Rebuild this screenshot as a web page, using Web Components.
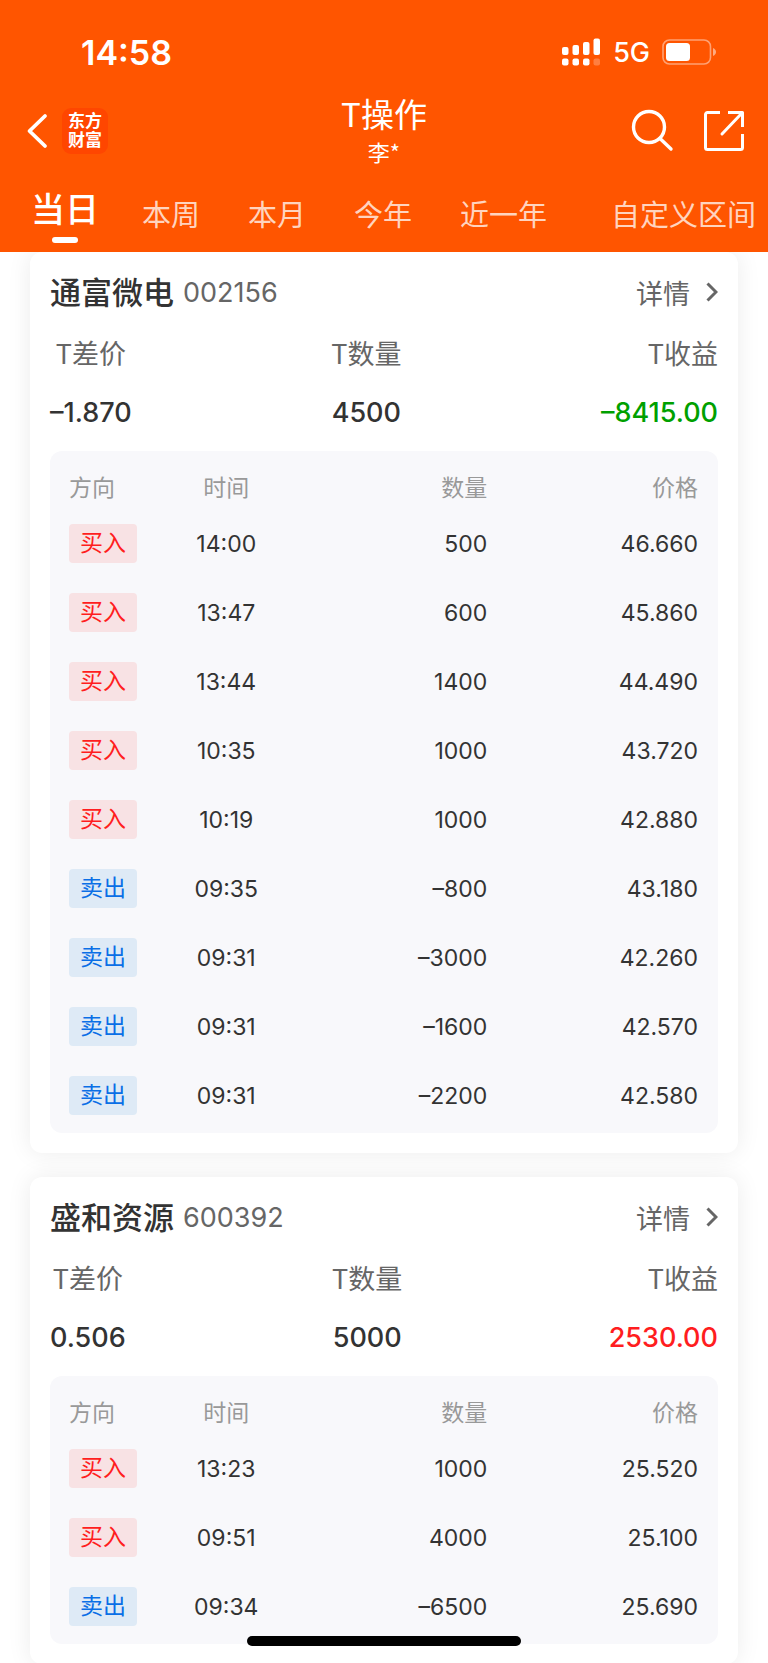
<!DOCTYPE html>
<html lang="zh-CN">
<head>
<meta charset="utf-8">
<meta name="viewport" content="width=device-width, initial-scale=1">
<title>T操作</title>
<style>
html, body {
	margin: 0;
	height: 100%;
}
body {
	font-family: Inter, "Noto Sans CJK SC", sans-serif;
	font-size: 24px;
	color: #333;
	background: #fff;
	--brand: #ff5500;
	--up: #ff1d20;
	--down: #00a000;
}
</style>
</head>
<body>
<t-app></t-app>
<script>
const stocks = [
	{
		name: '通富微电',
		code: '002156',
		spread: '–1.870',
		qty: '4500',
		profit: '–8415.00',
		tone: 'down',
		rows: [
			['14:00', 500, '46.660'],
			['13:47', 600, '45.860'],
			['13:44', 1400, '44.490'],
			['10:35', 1000, '43.720'],
			['10:19', 1000, '42.880'],
			['09:35', -800, '43.180'],
			['09:31', -3000, '42.260'],
			['09:31', -1600, '42.570'],
			['09:31', -2200, '42.580']
		]
	},
	{
		name: '盛和资源',
		code: '600392',
		spread: '0.506',
		qty: '5000',
		profit: '2530.00',
		tone: 'up',
		rows: [
			['13:23', 1000, '25.520'],
			['09:51', 4000, '25.100'],
			['09:34', -6500, '25.690']
		]
	}
];

const signed = n => n < 0 ? '–' + -n : String(n);

const define = (name, template, setup) => {
	customElements.define(name, class extends HTMLElement {
		constructor() {
			super();
			this.attachShadow({mode: 'open'}).innerHTML = template;
		}
		connectedCallback() {
			if (setup) setup(this, this.shadowRoot);
		}
	});
};

define('status-bar', `
<style>
:host {
	display: flex;
	align-items: center;
	justify-content: space-between;
	height: 72px;
	padding: 16px 51px 0 81px;
	color: #fff;
}
.time {
	font-size: 34px;
	font-weight: 600;
}
.right {
	display: flex;
	align-items: center;
	gap: 12px;
	font-size: 27px;
	font-weight: 500;
}
svg { display: block; }
</style>
<span class="time">14:58</span>
<div class="right">
	<svg width="39" height="28" viewBox="0 0 39 28" fill="#fff">
		<rect x="0" y="9" width="6.5" height="8" rx="2"/>
		<rect x="10.5" y="7" width="6.5" height="10" rx="2"/>
		<rect x="21" y="4" width="6.5" height="13" rx="2"/>
		<rect x="31.5" y="0.5" width="6.5" height="16.5" rx="2"/>
		<rect x="0" y="20.5" width="6.5" height="7" rx="2"/>
		<rect x="10.5" y="20.5" width="6.5" height="7" rx="2"/>
		<rect x="21" y="20.5" width="6.5" height="7" rx="2"/>
		<rect x="31.5" y="20.5" width="6.5" height="7" rx="2" opacity=".25"/>
	</svg>
	<span>5G</span>
	<svg width="55" height="26" viewBox="0 0 55 26">
		<rect x="1" y="1" width="47.5" height="24" rx="6.5" fill="none" stroke="#fff" stroke-opacity=".45" stroke-width="1.6"/>
		<rect x="4" y="4" width="24" height="18" rx="3.5" fill="#fff"/>
		<path d="M51 9c4 1.5 4 6.5 0 8z" fill="#fff" fill-opacity=".5"/>
	</svg>
</div>
`);

define('nav-bar', `
<style>
:host {
	display: grid;
	grid-template-columns: 1fr auto 1fr;
	align-items: center;
	height: 86px;
	padding: 0 23px;
	color: #fff;
}
.left, .right {
	display: flex;
	align-items: center;
}
.left { gap: 14px; }
.right {
	justify-content: flex-end;
	gap: 28px;
}
button {
	display: block;
	padding: 0;
	border: 0;
	background: none;
	color: inherit;
	font: inherit;
}
svg { display: block; }
.logo {
	display: grid;
	place-content: center;
	width: 46px;
	height: 46px;
	border-radius: 9px;
	background: #ff4600;
	color: #fff;
	font-size: 17px;
	font-weight: 700;
	line-height: 19px;
	text-decoration: none;
}
.title {
	padding-bottom: 4px;
	text-align: center;
}
h1 {
	margin: 0;
	font-family: "Noto Sans CJK SC", sans-serif;
	font-size: 33px;
	font-weight: 400;
	line-height: 44px;
}
p {
	margin: 0;
	font-family: "Noto Sans CJK SC", sans-serif;
	font-size: 22px;
	line-height: 32px;
}
</style>
<div class="left">
	<button aria-label="返回">
		<svg width="25" height="36" viewBox="-3 0 25 36" fill="none" stroke="#fff" stroke-width="3.8" stroke-linecap="round" stroke-linejoin="round"><path d="M19 3L3.500 18l15.500 15"/></svg>
	</button>
	<a class="logo" href="#">东方<br>财富</a>
</div>
<div class="title">
	<h1>T操作</h1>
	<p>李*</p>
</div>
<div class="right">
	<button aria-label="搜索">
		<svg width="44" height="44" viewBox="0 0 44 44" fill="none" stroke="#fff" stroke-width="3.4" stroke-linecap="round"><circle cx="18" cy="18" r="15.500"/><path d="M29 29.500L40 40"/></svg>
	</button>
	<button aria-label="分享">
		<svg width="42" height="42" viewBox="0 0 42 42" fill="none" stroke="#fff" stroke-width="3" stroke-linecap="butt" stroke-linejoin="round"><path d="M17 2.500H4.500a2 2 0 0 0-2 2v33a2 2 0 0 0 2 2h33a2 2 0 0 0 2-2V24M25 2.500h14.500V17"/><path d="M39 3L19 24" stroke-linecap="round"/></svg>
	</button>
</div>
`);

define('period-tabs', `
<style>
:host {
	display: block;
	color: #fff;
}
nav {
	display: flex;
	height: 78px;
	padding: 0 12px;
}
button {
	position: relative;
	flex: none;
	min-width: 106px;
	padding: 0 24px;
	border: 0;
	background: none;
	color: rgba(255, 255, 255, .75);
	font: 400 29px/74px "Noto Sans CJK SC", sans-serif;
	white-space: nowrap;
}
button:last-child {
	margin-left: auto;
	padding-right: 0;
}
button[aria-selected="true"] {
	padding: 0 18px 10px;
	color: #fff;
	font-size: 34px;
	font-weight: 500;
	line-height: 68px;
}
button[aria-selected="true"]::after {
	content: "";
	position: absolute;
	left: 50%;
	bottom: 9px;
	width: 26px;
	height: 6px;
	margin-left: -13px;
	border-radius: 3px;
	background: #fff;
}
</style>
<nav role="tablist"></nav>
`, (el, root) => {
	const names = ['当日', '本周', '本月', '今年', '近一年', '自定义区间'];
	root.querySelector('nav').innerHTML = names
		.map((n, i) => `<button role="tab" aria-selected="${i === 0}">${n}</button>`)
		.join('');
});

define('stat-item', `
<style>
:host {
	display: flex;
	flex-direction: column;
	align-items: center;
	gap: 20px;
	line-height: 40px;
}
:host([align="end"]) { align-items: flex-end; }
.label {
	color: #666;
	font-family: "Noto Sans CJK SC", sans-serif;
	font-size: 27px;
}
.value {
	font-size: 27px;
	font-weight: 500;
}
:host([tone="up"]) .value { color: var(--up); }
:host([tone="down"]) .value { color: var(--down); }
</style>
<span class="label"><slot name="label"></slot></span>
<span class="value"><slot></slot></span>
`);

define('side-tag', `
<style>
:host {
	display: inline-block;
	padding: 0 11px;
	border-radius: 4px;
	background: #f8e2e4;
	color: var(--up);
	font-size: 23px;
	line-height: 39px;
}
:host([side="sell"]) {
	background: #deeaf6;
	color: #0a6fe6;
}
</style>
<slot></slot>
`);

define('trade-table', `
<style>
:host {
	display: block;
	padding: 14px 20px 3px 19px;
	border-radius: 12px;
	background: #f8f8fb;
}
table {
	width: 100%;
	border-collapse: collapse;
	table-layout: fixed;
}
.side { width: 17%; }
.time { width: 16%; }
th, td {
	padding: 0;
	text-align: right;
	white-space: nowrap;
}
th {
	height: 42px;
	padding-bottom: 2px;
	color: #999;
	font-size: 23px;
	font-weight: 400;
}
td {
	height: 69px;
	font-size: 23px;
}
th:first-child, td:first-child { text-align: left; }
th:nth-child(2), td:nth-child(2) { text-align: center; }
side-tag { vertical-align: middle; }
</style>
<table>
	<colgroup><col class="side"><col class="time"><col><col></colgroup>
	<thead><tr><th>方向</th><th>时间</th><th>数量</th><th>价格</th></tr></thead>
	<tbody></tbody>
</table>
`, (el, root) => {
	root.querySelector('tbody').innerHTML = el.rows.map(([time, qty, price]) => {
		const sell = qty < 0;
		return `<tr>
			<td><side-tag side="${sell ? 'sell' : 'buy'}">${sell ? '卖出' : '买入'}</side-tag></td>
			<td>${time}</td>
			<td>${signed(qty)}</td>
			<td>${price}</td>
		</tr>`;
	}).join('');
});

define('stock-card', `
<style>
:host {
	display: block;
	padding: 20px;
	border-radius: 12px;
	background: #fff;
	box-shadow: 0 0 24px rgba(0, 0, 0, .08);
}
header {
	display: flex;
	align-items: center;
	height: 40px;
}
h2 {
	margin: 0;
	padding-bottom: 4px;
	font-size: 31px;
	font-weight: 500;
}
.code {
	flex: 1;
	margin-left: 9px;
	color: #666;
	font-size: 27px;
}
a {
	display: flex;
	align-items: center;
	gap: 16px;
	color: #666;
	font-size: 27px;
	text-decoration: none;
}
.stats {
	display: flex;
	justify-content: space-between;
	margin: 21px 0 18px;
}
</style>
<header>
	<h2></h2>
	<span class="code"></span>
	<a href="#">详情<svg width="12" height="20" viewBox="0 0 12 20" fill="none" stroke="#666" stroke-width="3"><path d="M1.500 1.500L10 10l-8.500 8.500"/></svg></a>
</header>
<div class="stats"></div>
`, (el, root) => {
	const s = el.stock;
	root.querySelector('h2').textContent = s.name;
	root.querySelector('.code').textContent = s.code;
	root.querySelector('.stats').innerHTML = `
		<stat-item><span slot="label">T差价</span>${s.spread}</stat-item>
		<stat-item><span slot="label">T数量</span>${s.qty}</stat-item>
		<stat-item align="end" tone="${s.tone}"><span slot="label">T收益</span>${s.profit}</stat-item>`;
	const table = document.createElement('trade-table');
	table.rows = s.rows;
	root.appendChild(table);
});

define('t-app', `
<style>
:host {
	display: flex;
	flex-direction: column;
	height: 100vh;
	overflow: hidden;
}
.top {
	flex: none;
	background: var(--brand);
}
main {
	flex: 1;
	min-height: 0;
	display: flex;
	flex-direction: column;
	gap: 24px;
	padding: 0 30px;
	overflow-y: auto;
	scrollbar-width: none;
}
stock-card { flex: none; }
.home {
	position: fixed;
	left: 50%;
	bottom: 17px;
	width: 274px;
	height: 10px;
	margin-left: -137px;
	border-radius: 5px;
	background: #000;
}
</style>
<div class="top">
	<status-bar></status-bar>
	<nav-bar></nav-bar>
	<period-tabs></period-tabs>
</div>
<main></main>
<div class="home"></div>
`, (el, root) => {
	stocks.forEach(stock => {
		const card = document.createElement('stock-card');
		card.stock = stock;
		root.querySelector('main').appendChild(card);
	});
});
</script>
</body>
</html>
